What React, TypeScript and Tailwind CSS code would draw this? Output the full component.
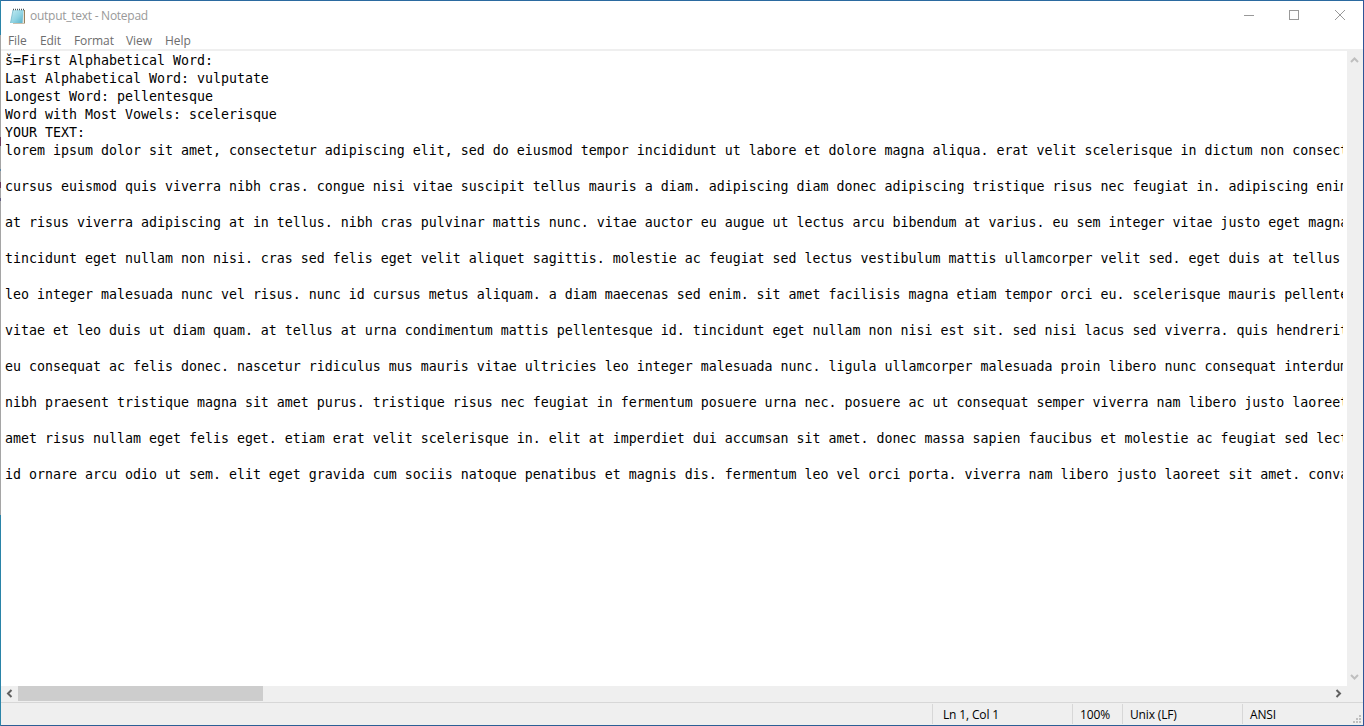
const lines: string[] = [
  'š=First Alphabetical Word:',
  'Last Alphabetical Word: vulputate',
  'Longest Word: pellentesque',
  'Word with Most Vowels: scelerisque',
  'YOUR TEXT:',
  'lorem ipsum dolor sit amet, consectetur adipiscing elit, sed do eiusmod tempor incididunt ut labore et dolore magna aliqua. erat velit scelerisque in dictum non consectetur',
  '',
  'cursus euismod quis viverra nibh cras. congue nisi vitae suscipit tellus mauris a diam. adipiscing diam donec adipiscing tristique risus nec feugiat in. adipiscing enim',
  '',
  'at risus viverra adipiscing at in tellus. nibh cras pulvinar mattis nunc. vitae auctor eu augue ut lectus arcu bibendum at varius. eu sem integer vitae justo eget magna',
  '',
  'tincidunt eget nullam non nisi. cras sed felis eget velit aliquet sagittis. molestie ac feugiat sed lectus vestibulum mattis ullamcorper velit sed. eget duis at tellus',
  '',
  'leo integer malesuada nunc vel risus. nunc id cursus metus aliquam. a diam maecenas sed enim. sit amet facilisis magna etiam tempor orci eu. scelerisque mauris pellentesque',
  '',
  'vitae et leo duis ut diam quam. at tellus at urna condimentum mattis pellentesque id. tincidunt eget nullam non nisi est sit. sed nisi lacus sed viverra. quis hendrerit',
  '',
  'eu consequat ac felis donec. nascetur ridiculus mus mauris vitae ultricies leo integer malesuada nunc. ligula ullamcorper malesuada proin libero nunc consequat interdum',
  '',
  'nibh praesent tristique magna sit amet purus. tristique risus nec feugiat in fermentum posuere urna nec. posuere ac ut consequat semper viverra nam libero justo laoreet',
  '',
  'amet risus nullam eget felis eget. etiam erat velit scelerisque in. elit at imperdiet dui accumsan sit amet. donec massa sapien faucibus et molestie ac feugiat sed lectus',
  '',
  'id ornare arcu odio ut sem. elit eget gravida cum sociis natoque penatibus et magnis dis. fermentum leo vel orci porta. viverra nam libero justo laoreet sit amet. convallis',
];

function NotepadIcon() {
  return (
    <svg width="16" height="17" viewBox="0 0 16 17" className="block">
      <defs>
        <linearGradient id="pad" x1="0" y1="0" x2="1" y2="1">
          <stop offset="0" stopColor="#c4ecf2" />
          <stop offset=".55" stopColor="#8fd3e2" />
          <stop offset="1" stopColor="#55aec8" />
        </linearGradient>
      </defs>
      <path d="M13.500 2h1.500v13.500H3V15h10z" fill="#96815c" />
      <path d="M13 3h1v12h-2z" fill="#e9e6dc" />
      <path d="M3 2h10.500L12.500 15H.5z" fill="url(#pad)" />
      <path d="M3 2L.5 15" stroke="#74b9ca" strokeWidth=".8" />
      <path d="M3 1.500h11" stroke="#46545a" strokeWidth="1.600" strokeDasharray="1 1" />
    </svg>
  );
}

function Chevron({ d, color }: { d: string; color: string }) {
  return (
    <svg width="9" height="9" viewBox="0 0 9 9" className="block">
      <path d={d} fill="none" stroke={color} strokeWidth="2" />
    </svg>
  );
}

function Menu() {
  return (
    <nav className="flex h-[18px] items-center pl-[7px] pt-[2px] text-[12px] leading-[18px] tracking-[-0.08px] text-[#6d6d6d]">
      <span className="w-8">File</span>
      <span className="w-[34px]">Edit</span>
      <span className="w-[52px]">Format</span>
      <span className="w-[39px]">View</span>
      <span>Help</span>
    </nav>
  );
}

export default function App() {
  return (
    <div className="flex h-[726px] w-[1364px] overflow-hidden bg-white font-['Open_Sans','Noto_Sans',sans-serif]">
      <div className="flex w-px shrink-0 flex-col bg-[#2a84a8]">
        <div className="mt-[35px] flex h-[480px] flex-col bg-[#a5a5a5]">
          <div className="mt-[102px] h-[9px] bg-[#6a3a5c]" />
          <div className="mt-[23px] h-[2px] bg-[#5a86a4]" />
          <div className="mt-[11px] h-[6px] bg-[#6a3a5c]" />
          <div className="mt-[10px] h-[3px] bg-[#5f5a80]" />
        </div>
      </div>
      <div className="flex min-w-0 flex-1 flex-col border-b border-t border-b-[#2d5f95] border-t-[#2b6aa0]">
        <header className="flex h-[30px] shrink-0 items-center">
          <div className="ml-[9px] w-[20px]">
            <NotepadIcon />
          </div>
          <h1 className="flex-1 text-[12px] tracking-[-0.26px] text-[#999999]">output_text - Notepad</h1>
          <svg width="120" height="30" viewBox="0 0 120 30" fill="none" stroke="#999" shapeRendering="crispEdges">
            <path d="M1 14.500h10M46.500 9.500h9v9h-9z" />
            <path d="M92 9l10 10M102 9l-10 10" shapeRendering="auto" />
          </svg>
        </header>
        <Menu />
        <div className="h-[2px] shrink-0 bg-[#efefef]" />
        <div className="flex min-h-0 flex-1">
          <main className="min-w-0 flex-1 overflow-hidden pl-1 pr-1 pt-px">
            <div className="overflow-hidden font-['DejaVu_Sans_Mono',monospace] text-[13.29px] leading-[18px] text-black">
              {lines.map((line, i) => (
                <div key={i} className="h-[18px] whitespace-pre">{line}</div>
              ))}
            </div>
          </main>
          <div className="flex w-4 shrink-0 flex-col items-start justify-between bg-[#efefef] pb-1 pl-[3px] pt-[5px]">
            <Chevron d="M1 6l3.500-3.500l3.500 3.500" color="#bfbfbf" />
            <Chevron d="M1 2l3.500 3.500l3.500-3.500" color="#bfbfbf" />
          </div>
        </div>
        <div className="flex h-4 shrink-0 items-start bg-[#efefef]">
          <div className="w-[17px] pl-1 pt-[3px]">
            <Chevron d="M6.500 1l-3.500 3.500l3.500 3.500" color="#606060" />
          </div>
          <div className="h-[15px] w-[245px] bg-[#cdcdcd]" />
          <div className="flex-1" />
          <div className="mr-[20px] pt-[3px]">
            <Chevron d="M2.500 1l3.500 3.500l-3.500 3.500" color="#606060" />
          </div>
        </div>
        <footer className="flex h-[23px] shrink-0 border-t border-[#d7d7d7] bg-[#efefef] pt-px text-[12px] leading-[22px] tracking-[-0.15px] text-black">
          <div className="w-[931px]" />
          <div className="h-5 w-[140px] border-l border-[#d7d7d7] pl-[10px]">Ln 1, Col 1</div>
          <div className="h-5 w-[50px] border-l border-[#d7d7d7] pl-[7px]">100%</div>
          <div className="h-5 w-[120px] border-l border-[#d7d7d7] pl-[7px]">Unix (LF)</div>
          <div className="h-5 flex-1 border-l border-[#d7d7d7] pl-[7px]">ANSI</div>
          <svg width="11" height="21" viewBox="0 0 11 21" fill="#bfbfbf">
            <path d="M7 11h2v2h-2zM4 14h2v2h-2zM7 14h2v2h-2zM1 17h2v2h-2zM4 17h2v2h-2zM7 17h2v2h-2z" />
          </svg>
        </footer>
      </div>
      <div className="w-px shrink-0 bg-[#2f5597]" />
    </div>
  );
}
